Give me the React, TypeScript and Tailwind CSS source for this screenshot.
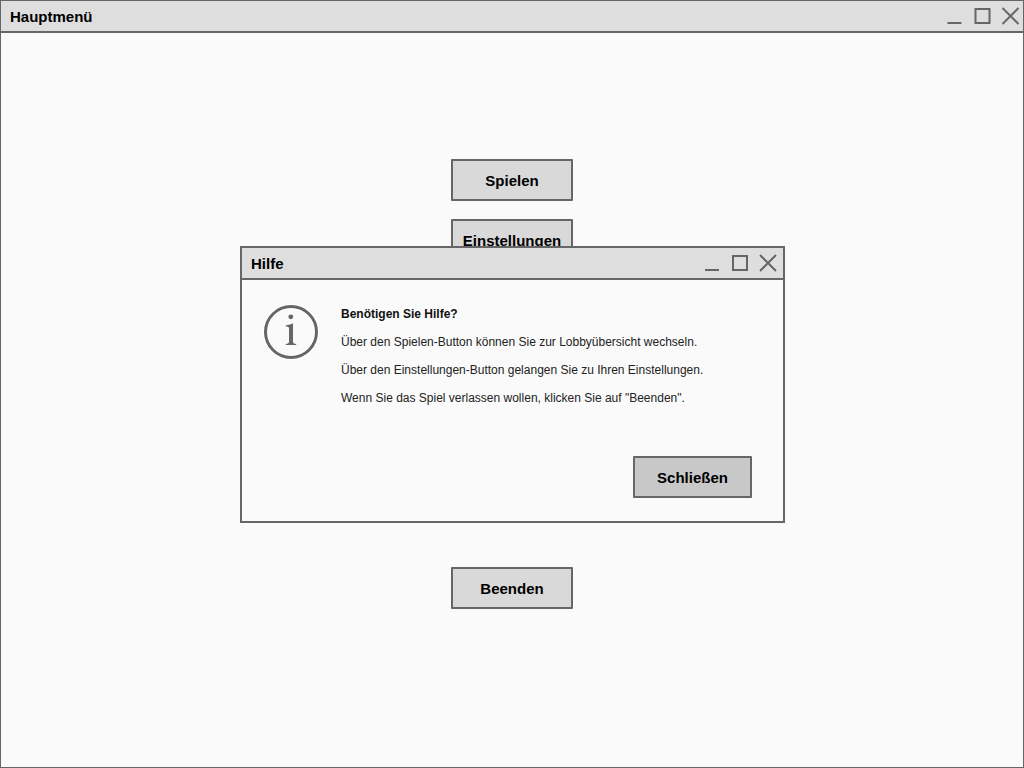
type ControlsProps = { viewBox?: string };

function WindowControls({ viewBox = '0 0 74 20' }: ControlsProps) {
  return (
    <svg width="74" height="20" viewBox={viewBox} fill="none" stroke="#666" strokeWidth="2" className="overflow-visible">
      <path d="M1 17H15" />
      <rect x="29" y="3" width="14" height="14" />
      <path d="M56 2L72 18M72 2L56 18" />
    </svg>
  );
}

type ButtonProps = { label: string; className: string };

function Button({ label, className }: ButtonProps) {
  return (
    <button
      className={`flex h-[42px] shrink-0 items-center justify-center rounded-[1px] border-2 border-[#666] pt-[2px] text-[15px] font-bold leading-[18px] whitespace-nowrap text-black ${className}`}
    >
      {label}
    </button>
  );
}

function HelpDialog() {
  return (
    <section className="absolute top-[246px] left-[240px] flex h-[277px] w-[545px] flex-col border-2 border-[#666] bg-[#fafafa]">
      <header className="flex h-8 shrink-0 items-center justify-between border-b-2 border-[#666] bg-[#dedede] pr-[5px] pl-[9px]">
        <h2 className="pt-[2px] text-[15px] font-bold leading-[18px]">Hilfe</h2>
        <WindowControls />
      </header>
      <div className="flex pt-[24px] pl-[21px]">
        <svg width="56" height="56" viewBox="-1 -1 56 56" className="shrink-0">
          <circle cx="27" cy="27" r="25.5" fill="none" stroke="#fff" strokeWidth="5" />
          <circle cx="27" cy="27" r="25.5" fill="none" stroke="#666" strokeWidth="3" />
          <circle cx="26.8" cy="11.8" r="2.4" fill="#666" />
          <path
            d="M21.8 20.3C24.8 20.1 27 19.4 29 18.3V36.2C29 38 30 38.6 32.2 38.9V40H21.8V38.9C24.2 38.6 25 38 25 36.2V23.3C25 21.8 24.2 21.4 21.8 21.4Z"
            fill="#666"
          />
        </svg>
        <div className="flex flex-col pt-px pl-[22px] text-[12px] leading-[14px] whitespace-nowrap text-[#222]">
          <p className="mb-[14px] pt-[2px] font-bold text-[#111]">Benötigen Sie Hilfe?</p>
          <p className="mb-[14px]">Über den Spielen-Button können Sie zur Lobbyübersicht wechseln.</p>
          <p className="mb-[14px]">Über den Einstellungen-Button gelangen Sie zu Ihren Einstellungen.</p>
          <p>Wenn Sie das Spiel verlassen wollen, klicken Sie auf "Beenden".</p>
        </div>
      </div>
      <div className="mt-auto flex justify-end pr-[31px] pb-[23px]">
        <Button label="Schließen" className="w-[119px] bg-[#c8c8c8]" />
      </div>
    </section>
  );
}

export default function App() {
  return (
    <div className="relative flex h-[768px] w-[1024px] flex-col overflow-hidden border border-[#666] bg-[#fafafa] font-['Liberation_Sans',Arial,sans-serif] text-black">
      <header className="flex h-8 shrink-0 items-center justify-between border-b-2 border-[#666] bg-[#dedede] pr-[3px] pl-[9px]">
        <h1 className="pt-[2px] text-[15px] font-bold leading-[18px]">Hauptmenü</h1>
        <WindowControls viewBox="-0.5 0 74 20" />
      </header>
      <main className="flex flex-1 flex-col items-center pt-[126px]">
        <Button label="Spielen" className="mb-[18px] w-[122px] bg-[#d9d9d9]" />
        <Button label="Einstellungen" className="mb-[306px] w-[122px] bg-[#d9d9d9]" />
        <Button label="Beenden" className="w-[122px] bg-[#d9d9d9]" />
      </main>
      <div className="absolute -top-px -left-px">
        <HelpDialog />
      </div>
    </div>
  );
}
